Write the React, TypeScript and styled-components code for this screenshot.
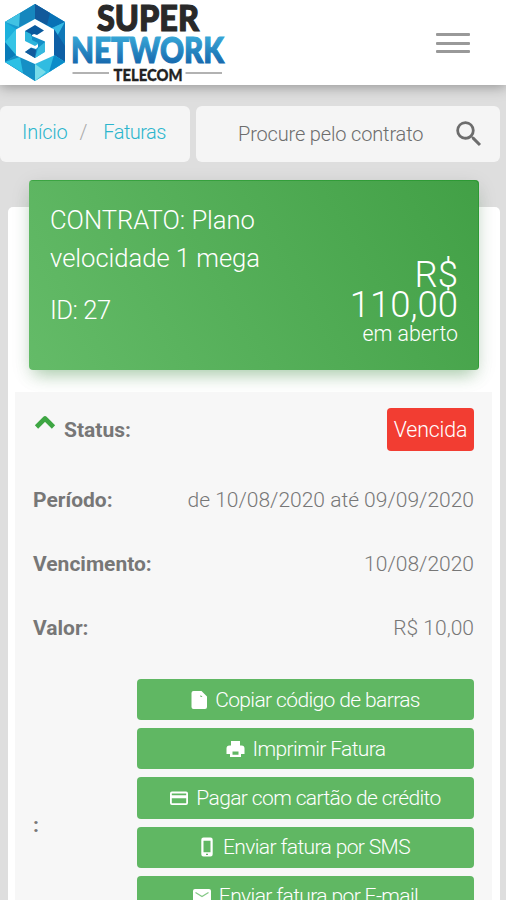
import React from "react";
import styled, { createGlobalStyle } from "styled-components";
import { MdSearch } from "react-icons/md";

const GlobalStyle = createGlobalStyle`
  * { box-sizing: border-box; }
  html, body { margin: 0; height: 900px; overflow: hidden; background: #dedede; }
  body { font-family: Roboto, "Liberation Sans", sans-serif; font-weight: 300; color: #777; }
`;

const Page = styled.div`
  height: 900px;
  overflow: hidden;
  display: flex;
  flex-direction: column;
  background: #dedede;
`;

const Header = styled.header`
  flex: none;
  height: 85px;
  display: flex;
  align-items: flex-start;
  justify-content: space-between;
  background: #fff;
  box-shadow: 0 2px 12px rgba(0, 0, 0, 0.34);
  z-index: 1;
`;

const Logo = styled.svg`
  display: block;
  width: 230px;
  height: 85px;
  overflow: visible;
`;

const MenuButton = styled.button`
  width: 34px;
  padding: 0;
  margin: 33px 36px 0 0;
  border: 0;
  background: none;
  display: flex;
  flex-direction: column;
  gap: 5.5px;
`;

const MenuLine = styled.span`
  height: 3px;
  border-radius: 1px;
  background: #999;
`;

const Toolbar = styled.div`
  flex: none;
  display: flex;
  gap: 6px;
  margin: 21px 6px 0 0;
  height: 56px;
`;

const Breadcrumb = styled.nav`
  width: 190px;
  border-radius: 6px;
  background: #f5f5f5;
  padding: 0 0 5px 22px;
  display: flex;
  align-items: center;
  font-size: 20px;
  letter-spacing: -0.2px;
`;

const Crumb = styled.a`
  color: #2cb5cd;
`;

const LastCrumb = styled(Crumb)`
  letter-spacing: -0.55px;
`;

const Separator = styled.span`
  color: #aaa;
  margin: 0 16px 0 12px;
`;

const Search = styled.div`
  flex: 1;
  border-radius: 6px;
  background: #f5f5f5;
  padding: 0 14px 0 42px;
  display: flex;
  align-items: center;
  justify-content: space-between;
  font-size: 20px;
  letter-spacing: -0.16px;
  color: #6d6d6d;

  svg { width: 34px; height: 34px; }
`;

const Card = styled.main`
  flex: 1;
  min-height: 0;
  margin: 45px 6px 0 8px;
  padding: 0 8px 0 7px;
  border-radius: 5px 5px 0 0;
  background: #fff;
`;

const Summary = styled.section`
  height: 190px;
  margin: -27px 13px 22px 14px;
  padding: 21px 21px 0;
  display: flex;
  justify-content: space-between;
  border-radius: 4px;
  color: #fff;
  background: linear-gradient(60deg, #64bb68, #42a046);
  box-shadow: inset -1px 1px 0 rgba(20, 145, 30, 0.45), 0 5px 20px rgba(0, 0, 0, 0.1),
    0 10px 16px -6px rgba(76, 175, 80, 0.4);
`;

const Contract = styled.div`
  width: 230px;
  font-size: 25.6px;
  letter-spacing: -0.02px;
  line-height: 38px;
`;

const ContractId = styled.div`
  margin-top: 14px;
  letter-spacing: -0.5px;
`;

const Balance = styled.div`
  padding-top: 59px;
  text-align: right;
`;

const Amount = styled.div`
  font-size: 36.5px;
  line-height: 30px;
`;

const AmountNote = styled.div`
  font-size: 21.3px;
  line-height: 28px;
`;

const Details = styled.section`
  height: 520px;
  padding: 0 18px;
  background: #f7f7f7;
`;

const Row = styled.div<{ $height: number }>`
  height: ${(p) => p.$height}px;
  display: flex;
  align-items: center;
  justify-content: space-between;
  font-size: 21px;
`;

const Label = styled.span`
  display: flex;
  align-items: center;
  font-size: 21px;
  font-weight: 700;
`;

const Chevron = styled.svg`
  width: 22px;
  height: 15px;
  margin: -15px 8px 0 1px;
`;

const Badge = styled.span`
  height: 43px;
  width: 87px;
  display: flex;
  align-items: center;
  justify-content: center;
  border-radius: 4px;
  background: #f23d32;
  color: #fff;
  font-size: 21.3px;
  letter-spacing: -0.15px;
`;

const ActionsRow = styled.div`
  display: flex;
  justify-content: space-between;
  padding-top: 19px;
`;

const ActionsLabel = styled(Label)`
  height: 292px;
`;

const Actions = styled.div`
  width: 337px;
  display: flex;
  flex-direction: column;
  gap: 8px;
`;

const Action = styled.button`
  height: 41.2px;
  flex: none;
  border: 0;
  border-radius: 4px;
  padding: 0;
  display: flex;
  align-items: center;
  justify-content: center;
  gap: 8px;
  background: #60b763;
  color: #fff;
  font: 300 21px Roboto, sans-serif;
  letter-spacing: -0.62px;
`;

const ActionIcon = styled.svg<{ $width: number }>`
  width: ${(p) => p.$width}px;
  height: 20px;
  flex: none;
`;

type IconName = "file" | "print" | "card" | "phone" | "mail";

const icons: Record<IconName, { width: number; shape: React.ReactNode }> = {
  file: {
    width: 16,
    shape: <path fillRule="evenodd" d="M2.500 1h8L16 6.500V17a2 2 0 0 1-2 2H2.500a2 2 0 0 1-2-2V3a2 2 0 0 1 2-2ZM9.500 5v2h2Z" />,
  },
  print: {
    width: 19,
    shape: (
      <path fillRule="evenodd" d="M5 2h9v4.500h1.500A3 3 0 0 1 18.500 9.500V15H15v3H4v-3H.5V9.500a3 3 0 0 1 3-3H5ZM6.500 12.500v3.300h6v-3.300Z" />
    ),
  },
  card: {
    width: 18,
    shape: (
      <path fillRule="evenodd" d="M2 3.500h14a2 2 0 0 1 2 2v9.500a2 2 0 0 1-2 2H2a2 2 0 0 1-2-2V5.500a2 2 0 0 1 2-2ZM1.800 5.400v1.800h14.400V5.400ZM1.800 10.300v4.900h14.400v-4.900Z" />
    ),
  },
  phone: {
    width: 14,
    shape: (
      <path transform="translate(-1 0)" fillRule="evenodd" d="M3.500.5h7a2.200 2.200 0 0 1 2.200 2.200v14.600a2.200 2.200 0 0 1-2.200 2.200h-7a2.200 2.200 0 0 1-2.200-2.200V2.700A2.200 2.200 0 0 1 3.500.5ZM3.500 3.700v11.500h7V3.700ZM6 16.700v1.200h2v-1.200Z" />
    ),
  },
  mail: {
    width: 18,
    shape: (
      <>
        <rect y="3" width="18" height="14.500" rx="2" />
        <path d="m2.500 6.500 6.500 4 6.500-4" fill="none" stroke="#84c886" strokeWidth="1.200" />
      </>
    ),
  },
};

const actions: { icon: IconName; text: string }[] = [
  { icon: "file", text: "Copiar código de barras" },
  { icon: "print", text: "Imprimir Fatura" },
  { icon: "card", text: "Pagar com cartão de crédito" },
  { icon: "phone", text: "Enviar fatura por SMS" },
  { icon: "mail", text: "Enviar fatura por E-mail" },
];

function BrandLogo() {
  return (
    <Logo viewBox="0 0 230 85" aria-label="Super Network Telecom">
      <defs>
        <linearGradient id="word" x1="0" y1="0" x2="0" y2="1">
          <stop offset=".2" stopColor="#39a9d8" />
          <stop offset=".85" stopColor="#1768ad" />
        </linearGradient>
      </defs>
      <path d="M35 4 65 22v40L35 81 5 62V22Z" fill="#189bd1" />
      <path d="M35 4 5 22l14 5 16-8Z" fill="#1687be" />
      <path d="M20 13 5 22l14 5Z" fill="#41c2e3" />
      <path d="m35 4 30 18-13 6-17-9Z" fill="#0871b5" />
      <path d="m35 4 15 9-3 12-12-6Z" fill="#12599b" />
      <path d="M5 22v20l11-13Z" fill="#1bb0dc" />
      <path d="M5 42v20l11-7V29Z" fill="#35c4e6" />
      <path d="m5 42 11 13-11 7Z" fill="#087bb8" />
      <path d="m65 22-13 6 2 14Z" fill="#35b8e3" />
      <path d="m65 22-11 20 11 20Z" fill="#1078b8" />
      <path d="M54 29v26l11 7V46Z" fill="#0e5fa5" />
      <path d="M5 62 35 81V64l-19-9Z" fill="#158fc5" />
      <path d="m5 62 15-5 3 16Z" fill="#2cc0e5" />
      <path d="m35 81 30-19-11-7-19 9Z" fill="#30bce1" />
      <path d="m65 62-11-7-5 17Z" fill="#0b8cc9" />
      <path d="m35 64 11 8-11 9Z" fill="#77dcea" />
      <path d="M35 19 54 29.500v26L35 64 16 55.500v-26Z" fill="#fff" />
      <path d="m35 25 9 5.500-7 4.500-3-1-2 1v5l-7-4v-5Z" fill="#09599d" />
      <path d="M25 31v10l10 5 3-2v-3l-6-4-1-3Z" fill="#2cb5dc" />
      <path d="m32 36 13 5.500v10l-10 6.500-10-6 6-4.500 5 1.500 2-2v-4l-6-3Z" fill="#138ec7" />
      <path d="m25 52 6-4 5 2-1 8Z" fill="#125a9c" />
      <path d="m45 42-7 6-3 10 10-6Z" fill="#35b9df" />
      <g fontFamily="Lato" fontWeight="900">
        <text x="97" y="31" fontSize="35.500" textLength="102" lengthAdjust="spacingAndGlyphs" fill="#292929" stroke="#292929" strokeWidth="1.200">SUPER</text>
        <text x="71" y="62.500" fontSize="36.500" textLength="153" lengthAdjust="spacingAndGlyphs" fill="url(#word)" stroke="url(#word)" strokeWidth="1.200">NETWORK</text>
        <text x="113.500" y="81" fontSize="16.500" textLength="69" lengthAdjust="spacingAndGlyphs" fill="#222" stroke="#222" strokeWidth=".3">TELECOM</text>
      </g>
      <path d="M72.500 73H109M185.500 73H222" stroke="#999" strokeWidth="1.500" />
    </Logo>
  );
}

export default function App() {
  return (
    <Page>
      <GlobalStyle />
      <Header>
        <BrandLogo />
        <MenuButton aria-label="Menu">
          <MenuLine />
          <MenuLine />
          <MenuLine />
        </MenuButton>
      </Header>
      <Toolbar>
        <Breadcrumb>
          <Crumb>Início</Crumb>
          <Separator>/</Separator>
          <LastCrumb>Faturas</LastCrumb>
        </Breadcrumb>
        <Search>
          <span>Procure pelo contrato</span>
          <MdSearch />
        </Search>
      </Toolbar>
      <Card>
        <Summary>
          <Contract>
            CONTRATO: Plano velocidade 1 mega
            <ContractId>ID: 27</ContractId>
          </Contract>
          <Balance>
            <Amount>
              R$
              <br />
              110,00
            </Amount>
            <AmountNote>em aberto</AmountNote>
          </Balance>
        </Summary>
        <Details>
          <Row $height={75}>
            <Label>
              <Chevron viewBox="0 0 22 15">
                <path d="m2.500 12 8.500-8.500 8.500 8.500" fill="none" stroke="#3ea643" strokeWidth="4.600" strokeLinejoin="round" />
              </Chevron>
              Status:
            </Label>
            <Badge>Vencida</Badge>
          </Row>
          <Row $height={65}>
            <Label>Período:</Label>
            <span>de 10/08/2020 até 09/09/2020</span>
          </Row>
          <Row $height={64}>
            <Label>Vencimento:</Label>
            <span>10/08/2020</span>
          </Row>
          <Row $height={64}>
            <Label>Valor:</Label>
            <span>R$ 10,00</span>
          </Row>
          <ActionsRow>
            <ActionsLabel>:</ActionsLabel>
            <Actions>
              {actions.map(({ icon, text }) => (
                <Action key={icon}>
                  <ActionIcon $width={icons[icon].width} viewBox={`0 0 ${icons[icon].width} 20`} fill="#fff">
                    {icons[icon].shape}
                  </ActionIcon>
                  {text}
                </Action>
              ))}
            </Actions>
          </ActionsRow>
        </Details>
      </Card>
    </Page>
  );
}
